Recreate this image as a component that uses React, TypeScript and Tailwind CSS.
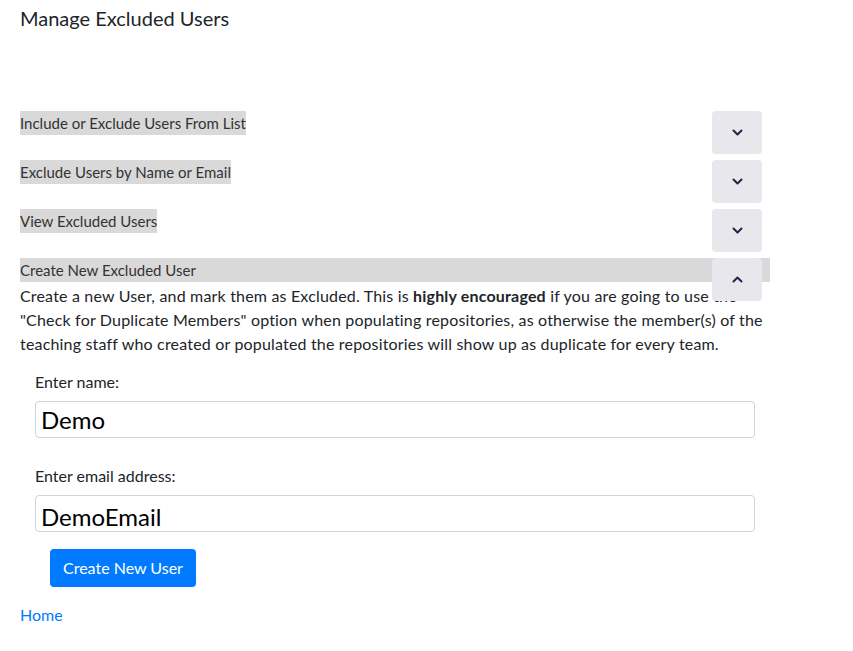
const sections = [
  "Include or Exclude Users From List",
  "Exclude Users by Name or Email",
  "View Excluded Users",
];

function Chevron({ up }: { up?: boolean }) {
  return (
    <svg width="11" height="7" viewBox="0 0 11 7" fill="none">
      <path
        d={up ? "M1.5 5.5 L5.5 1.5 L9.5 5.5" : "M1.5 1.5 L5.5 5.5 L9.5 1.5"}
        stroke="#1b2845"
        strokeWidth="2"
        strokeLinecap="round"
        strokeLinejoin="round"
      />
    </svg>
  );
}

function ToggleButton({ up }: { up?: boolean }) {
  return (
    <button className="absolute right-[8px] top-0 flex h-[43px] w-[50px] items-center justify-center rounded-[4px] bg-[#e8e8ec]">
      <Chevron up={up} />
    </button>
  );
}

export default function App() {
  return (
    <div
      className="min-h-screen bg-white px-5 text-[#212529]"
      style={{ fontFamily: 'Lato, sans-serif' }}
    >
      <h1 className="pt-[3px] text-[20px] leading-[30px]">Manage Excluded Users</h1>

      <div className="mt-[78px] w-[750px]">
        {sections.map((s) => (
          <div key={s} className="relative mb-[25px] h-[24px]">
            <span className="inline-block bg-[#d9d9d9] text-[15px] leading-[24px] text-[#333]">{s}</span>
            <ToggleButton />
          </div>
        ))}

        <div className="relative">
          <div className="h-[24px] bg-[#d9d9d9] text-[15px] leading-[24px] text-[#333]">Create New Excluded User</div>
          <ToggleButton up />
          <p className="mt-[2px] w-[770px] text-[16px] leading-[24px] tracking-[0.18px]">
            Create a new User, and mark them as Excluded. This is <b>highly encouraged</b> if you are going to use
            the "Check for Duplicate Members" option when populating repositories, as otherwise the member(s) of the
            teaching staff who created or populated the repositories will show up as duplicate for every team.
          </p>
        </div>
      </div>

      <div className="mt-[14px] pl-[15px]">
        <label className="block text-[16px] leading-[24px]">Enter name:</label>
        <input
          defaultValue="Demo"
          className="mt-[7px] block h-[37px] w-[720px] rounded-[4px] border border-[#ced4da] px-[5px] text-[24px] text-black outline-none"
        />
        <label className="mt-[26px] block text-[16px] leading-[24px]">Enter email address:</label>
        <input
          defaultValue="DemoEmail"
          className="mt-[7px] block h-[37px] w-[720px] rounded-[4px] border border-[#ced4da] px-[5px] pt-[6px] text-[24px] text-black outline-none"
        />
        <button className="ml-[15px] mt-[17px] h-[38px] rounded-[4px] bg-[#007bff] px-[13px] text-[16px] text-white">
          Create New User
        </button>
      </div>

      <a href="#" className="mt-[16px] block text-[16px] leading-[24px] text-[#007bff]">
        Home
      </a>
    </div>
  );
}
